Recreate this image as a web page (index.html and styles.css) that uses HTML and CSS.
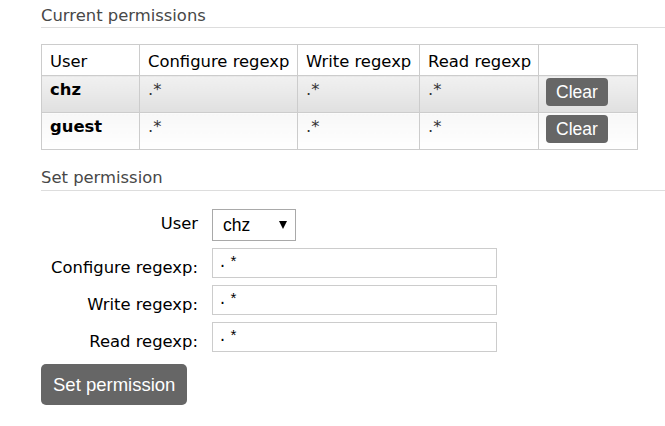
FILE: index.html
```html
<!DOCTYPE html>
<html>
<head>
<meta charset="utf-8">
<link rel="stylesheet" href="styles.css">
</head>
<body>
<div class="page">
  <h3 class="title title-current">Current permissions</h3>
  <table class="perm">
    <colgroup>
      <col class="c-user"><col class="c-conf"><col class="c-write"><col class="c-read"><col class="c-act">
    </colgroup>
    <thead>
      <tr><th>User</th><th>Configure regexp</th><th>Write regexp</th><th>Read regexp</th><th></th></tr>
    </thead>
    <tbody>
      <tr class="alt1">
        <td class="user">chz</td><td class="val">.*</td><td class="val">.*</td><td class="val">.*</td>
        <td class="act"><button class="btn-clear" type="button">Clear</button></td>
      </tr>
      <tr class="alt2">
        <td class="user">guest</td><td class="val">.*</td><td class="val">.*</td><td class="val">.*</td>
        <td class="act"><button class="btn-clear" type="button">Clear</button></td>
      </tr>
    </tbody>
  </table>
  <h3 class="title title-set">Set permission</h3>
  <form class="perm-form">
    <label class="lbl lbl-user" for="user">User</label>
    <div class="select-wrap">
      <select id="user" class="select"><option>chz</option><option>guest</option></select>
      <svg class="arrow" width="8" height="8" viewBox="0 0 8 8"><polygon points="0,0 8,0 4,8" fill="#000"/></svg>
    </div>
    <label class="lbl" for="conf">Configure regexp:</label>
    <input id="conf" class="txt" type="text" value=".*">
    <label class="lbl" for="write">Write regexp:</label>
    <input id="write" class="txt" type="text" value=".*">
    <label class="lbl" for="read">Read regexp:</label>
    <input id="read" class="txt" type="text" value=".*">
    <div class="submit-row"><button class="btn-set" type="button">Set permission</button></div>
  </form>
</div>
</body>
</html>
```
FILE: styles.css
```css
html, body {
  margin: 0;
  padding: 0;
  background: #fff;
}
body {
  font-family: "DejaVu Sans", Verdana, sans-serif;
  color: #000;
  width: 665px;
  overflow: hidden;
}
.page {
  padding-left: 41px;
}
.title {
  margin: 0;
  font-size: 16.4px;
  line-height: 19px;
  font-weight: normal;
  color: #484848;
  border-bottom: 1px solid #ddd;
}
.title-current {
  padding: 6px 0 2px;
}
.title-set {
  margin-top: 18px;
  padding: 0 0 3px;
}
.perm {
  margin-top: 16px;
  border-collapse: collapse;
  table-layout: fixed;
  width: 596px;
  font-size: 16.4px;
  line-height: 19px;
}
.c-user { width: 98px; }
.c-conf { width: 158px; }
.c-write { width: 122px; }
.c-read { width: 119px; }
.c-act { width: 99px; }
.perm th, .perm td {
  border: 1px solid #ccc;
  text-align: left;
  vertical-align: top;
}
.perm th {
  font-weight: normal;
  padding: 7px 8px 4px;
  background: #fff;
  white-space: nowrap;
}
.perm td {
  padding: 4px 8px;
}
.perm td.user {
  font-weight: bold;
}
.perm td.val {
  color: #333;
}
.perm td.act {
  padding: 2px 7px 6px;
}
.alt1 td {
  background: linear-gradient(#f1f1f1, #e0e0e0);
}
.alt2 td {
  background: linear-gradient(#f7f7f7, #fff);
}
.btn-clear {
  display: block;
  width: 62px;
  height: 28px;
  padding: 0;
  border: 0;
  border-radius: 4px;
  background: #666;
  color: #fff;
  font-family: "Liberation Sans", Arial, sans-serif;
  font-size: 17.5px;
  line-height: 28px;
}
.perm-form {
  margin-top: 18px;
  display: grid;
  grid-template-columns: 157px 285px;
  column-gap: 14px;
  row-gap: 7px;
  align-items: start;
  font-size: 16.4px;
  line-height: 19px;
}
.lbl {
  text-align: right;
  padding-top: 10px;
  white-space: nowrap;
}
.lbl-user {
  padding-top: 5px;
}
.select-wrap {
  position: relative;
  width: 84px;
  height: 32px;
}
.select {
  -webkit-appearance: none;
  appearance: none;
  box-sizing: border-box;
  width: 84px;
  height: 32px;
  margin: 0;
  padding: 0 0 0 10px;
  border: 1px solid #a9a9a9;
  border-radius: 0;
  background: #fff;
  color: #000;
  font-family: "Liberation Sans", Arial, sans-serif;
  font-size: 17.5px;
}
.arrow {
  position: absolute;
  right: 9px;
  top: 12px;
  pointer-events: none;
}
.txt {
  box-sizing: border-box;
  width: 285px;
  height: 30px;
  margin: 0;
  padding: 0 5px;
  border: 1px solid #ccc;
  font-family: "Liberation Mono", "Courier New", monospace;
  font-size: 15px;
  letter-spacing: 2px;
  color: #000;
  outline: none;
}
.submit-row {
  grid-column: 1 / -1;
  margin-top: 5px;
}
.btn-set {
  display: block;
  height: 41px;
  padding: 0 12px;
  border: 0;
  border-radius: 5px;
  background: #666;
  color: #fff;
  font-family: "Liberation Sans", Arial, sans-serif;
  font-size: 18.5px;
}
```
